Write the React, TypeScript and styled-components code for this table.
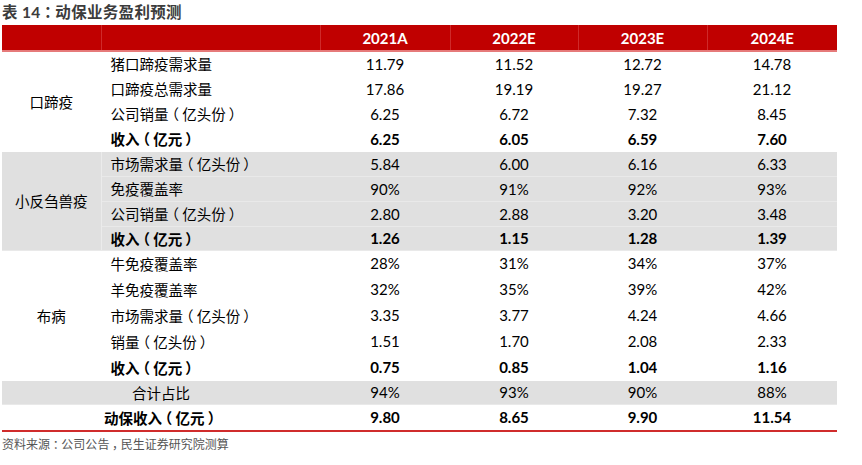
import styled, { createGlobalStyle } from 'styled-components';

const GlobalStyle = createGlobalStyle`
  html, body {
    margin: 0;
    padding: 0;
    background: #ffffff;
  }
  body {
    font-family: "Lato", "Noto Sans CJK SC", sans-serif;
  }
`;

type Row = { label: string; values: string[]; bold?: boolean; h: number };
type Group = { name: string; gray?: boolean; rows: Row[] };

const years = ['2021A', '2022E', '2023E', '2024E'];

const groups: Group[] = [
    {
        name: '口蹄疫',
        rows: [
            { label: '猪口蹄疫需求量', values: ['11.79', '11.52', '12.72', '14.78'], h: 25 },
            { label: '口蹄疫总需求量', values: ['17.86', '19.19', '19.27', '21.12'], h: 25 },
            { label: '公司销量（亿头份）', values: ['6.25', '6.72', '7.32', '8.45'], h: 25 },
            { label: '收入（亿元）', values: ['6.25', '6.05', '6.59', '7.60'], bold: true, h: 25 },
        ],
    },
    {
        name: '小反刍兽疫',
        gray: true,
        rows: [
            { label: '市场需求量（亿头份）', values: ['5.84', '6.00', '6.16', '6.33'], h: 25 },
            { label: '免疫覆盖率', values: ['90%', '91%', '92%', '93%'], h: 25 },
            { label: '公司销量（亿头份）', values: ['2.80', '2.88', '3.20', '3.48'], h: 25 },
            { label: '收入（亿元）', values: ['1.26', '1.15', '1.28', '1.39'], bold: true, h: 24 },
        ],
    },
    {
        name: '布病',
        rows: [
            { label: '牛免疫覆盖率', values: ['28%', '31%', '34%', '37%'], h: 26 },
            { label: '羊免疫覆盖率', values: ['32%', '35%', '39%', '42%'], h: 26 },
            { label: '市场需求量（亿头份）', values: ['3.35', '3.77', '4.24', '4.66'], h: 26 },
            { label: '销量（亿头份）', values: ['1.51', '1.70', '2.08', '2.33'], h: 26 },
            { label: '收入（亿元）', values: ['0.75', '0.85', '1.04', '1.16'], bold: true, h: 26 },
        ],
    },
];

// full-width punctuation: centre it in its box, as in the source document
function zh(text: string) {
    return Array.from(text).map((ch, i) =>
        '（）：，'.includes(ch) ? <Punct key={i}>{ch}</Punct> : ch
    );
}

export default function App() {
    return (
        <Page>
            <GlobalStyle />
            <Title>{zh('表 14：动保业务盈利预测')}</Title>
            <Table>
                <colgroup>
                    <col style={{ width: 99 }} />
                    <col style={{ width: 219 }} />
                    <col style={{ width: 130 }} />
                    <col style={{ width: 128 }} />
                    <col style={{ width: 129 }} />
                    <col style={{ width: 130 }} />
                </colgroup>
                <thead>
                    <tr>
                        <HeadCell />
                        <HeadCell />
                        {years.map((y) => (
                            <HeadCell key={y}>{y}</HeadCell>
                        ))}
                    </tr>
                </thead>
                <tbody>
                    {groups.map((g) =>
                        g.rows.map((r, i) => (
                            <BodyRow key={g.name + r.label} $gray={g.gray} $h={r.h}>
                                {i === 0 && (
                                    <GroupCell rowSpan={g.rows.length} $gray={g.gray}>
                                        {g.name}
                                    </GroupCell>
                                )}
                                <LabelCell $bold={r.bold}>{zh(r.label)}</LabelCell>
                                {r.values.map((v, k) => (
                                    <ValueCell key={k} $bold={r.bold}>{v}</ValueCell>
                                ))}
                            </BodyRow>
                        ))
                    )}
                    <BodyRow $gray $h={24}>
                        <CenterCell colSpan={2}>合计占比</CenterCell>
                        {['94%', '93%', '90%', '88%'].map((v) => (
                            <ValueCell key={v}>{v}</ValueCell>
                        ))}
                    </BodyRow>
                    <TotalRow>
                        <CenterCell colSpan={2} $bold>{zh('动保收入（亿元）')}</CenterCell>
                        {['9.80', '8.65', '9.90', '11.54'].map((v) => (
                            <ValueCell key={v} $bold>{v}</ValueCell>
                        ))}
                    </TotalRow>
                </tbody>
            </Table>
            <Source>{zh('资料来源：公司公告，民生证券研究院测算')}</Source>
        </Page>
    );
}

const Page = styled.div`
  width: 862px;
  height: 465px;
  padding: 0 0 0 2px;
  box-sizing: border-box;
  overflow: hidden;
`;

const Punct = styled.span`
  font-feature-settings: "halt" 1;
  padding: 0 0.22em;
`;

const Title = styled.div`
  height: 25px;
  line-height: 24px;
  font-size: 15.5px;
  letter-spacing: 0.3px;
  font-weight: 700;
  color: #3c3c3c;
`;

const Table = styled.table`
  width: 835px;
  border-collapse: collapse;
  table-layout: fixed;
  color: #000000;
`;

const HeadCell = styled.th`
  height: 25px;
  padding: 0;
  background: #c00000;
  color: #ffffff;
  font-size: 15px;
  font-weight: 700;
  text-align: center;
  border-left: 1px solid #cf2a2a;
  border-bottom: 2px solid #e67a7a;
  &:first-child {
    border-left: none;
  }
`;

const BodyRow = styled.tr<{ $gray?: boolean; $h: number }>`
  height: ${({ $h }) => $h}px;
  background: ${({ $gray }) => ($gray ? '#e0e0e0' : '#ffffff')};
  & > td {
    border-bottom: 1px solid ${({ $gray }) => ($gray ? '#e9e9e9' : '#ffffff')};
  }
`;

const TotalRow = styled.tr`
  height: 27px;
  & > td {
    border-bottom: 2px solid #d02c2c;
  }
`;

const GroupCell = styled.td<{ $gray?: boolean }>`
  padding: 0;
  text-align: center;
  font-size: 14.5px;
  border-right: 1px solid ${({ $gray }) => ($gray ? '#ebebeb' : '#ffffff')};
`;

const LabelCell = styled.td<{ $bold?: boolean }>`
  padding: 0 0 0 9px;
  text-align: left;
  font-size: 14.5px;
  font-weight: ${({ $bold }) => ($bold ? 700 : 400)};
  white-space: nowrap;
`;

const CenterCell = styled.td<{ $bold?: boolean }>`
  padding: 0;
  text-align: center;
  font-size: 14.5px;
  font-weight: ${({ $bold }) => ($bold ? 700 : 400)};
`;

const ValueCell = styled.td<{ $bold?: boolean }>`
  padding: 0;
  text-align: center;
  font-size: 15px;
  font-weight: ${({ $bold }) => ($bold ? 700 : 400)};
`;

const Source = styled.div`
  margin-top: 5px;
  font-size: 12px;
  line-height: 16px;
  color: #555555;
`;
